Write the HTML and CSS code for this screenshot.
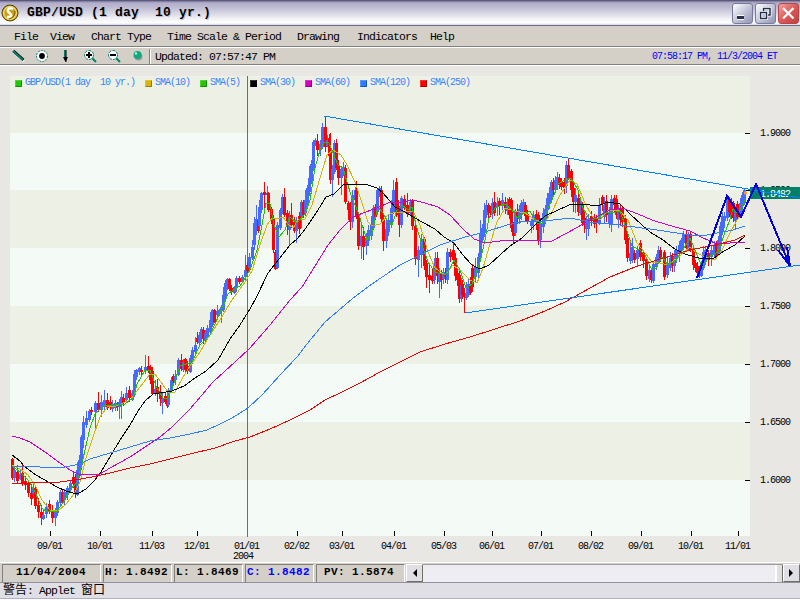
FILE: index.html
```html
<!DOCTYPE html>
<html lang="en">
<head>
    <meta charset="UTF-8">
    <title>GBP/USD (1 day 10 yr.)</title>
    <link rel="stylesheet" href="styles.css">
</head>
<body>
    <div class="window">
        <div class="title-bar">
            <svg class="app-icon" width="18" height="18" viewBox="0 0 18 18">
                <circle cx="9" cy="9" r="8" fill="#c9a21c" stroke="#594400"/>
                <circle cx="9" cy="9" r="6.3" fill="none" stroke="#fff6a0"/>
                <path d="M12 5C8 3 5 6 8 8.500S12 13 6 13" fill="none" stroke="#fff" stroke-width="2.400"/>
                <path d="M14 7C14 11 12 14 8 15" fill="none" stroke="#6f5600"/>
            </svg>
            <h1>GBP/USD (1 day&nbsp; 10 yr.)</h1>
            <div class="window-buttons">
                <button class="win-btn">
                    <svg width="19" height="19"><path d="M4 13.500h7" stroke="#fff" stroke-width="5"/><path d="M4 13.500h7" stroke="#273047" stroke-width="3"/></svg>
                </button>
                <button class="win-btn">
                    <svg width="19" height="19" fill="none"><path d="M7 7V4.500h7V11h-2M4.500 8.500h6v6h-6z" stroke="#fff" stroke-width="3"/><path d="M7.500 7V4.500h6.500V11h-2M4.500 8.500h6v6h-6z" stroke="#273047" stroke-width="1.500"/></svg>
                </button>
                <button class="win-btn close">
                    <svg width="19" height="19"><path d="M4 4l10.500 10.500M14.500 4L4 14.500" stroke="#fff" stroke-width="2.200"/></svg>
                </button>
            </div>
        </div>

        <div class="menu-bar">
            <span>File</span>
            <span>View</span>
            <span>Chart Type</span>
            <span>Time Scale &amp; Period</span>
            <span>Drawing</span>
            <span>Indicators</span>
            <span>Help</span>
        </div>

        <div class="toolbar">
            <svg class="tools" width="138" height="16" viewBox="0 0 138 16">
                <path d="M4 4l10 9" stroke="#fff" stroke-width="3"/>
                <path d="M3.500 3l10 9" stroke="#000" stroke-width="3"/>
                <path d="M3 3l10 9" stroke="#008066" stroke-width="2"/>
                <circle cx="32" cy="8" r="5.500" fill="#fff" stroke="#008066" stroke-dasharray="2 1"/>
                <circle cx="32" cy="8" r="2.900"/>
                <path d="M55 2v9" stroke="#008066" stroke-width="2"/>
                <path d="M56 2v12" stroke="#000"/>
                <path d="M53 9h5l-2.500 5z"/>
                <path d="M82 10l4 4" stroke="#008066" stroke-width="2"/>
                <circle cx="79" cy="7" r="4.500" fill="#fff" stroke="#008066" stroke-dasharray="3 1"/>
                <path d="M76 7h6M79 4v6" stroke="#000" stroke-width="2"/>
                <path d="M106 10l4 4" stroke="#008066" stroke-width="2"/>
                <circle cx="103" cy="7" r="4.500" fill="#fff" stroke="#008066" stroke-dasharray="3 1"/>
                <path d="M100 7h6" stroke="#000" stroke-width="2"/>
                <circle cx="128.500" cy="8.500" r="4" fill="#999"/>
                <circle cx="127.500" cy="7" r="4" fill="#13a87c"/>
                <circle cx="126" cy="5.500" r="1.200" fill="#b5ffe2"/>
            </svg>
            <span class="updated">Updated: 07:57:47 PM</span>
            <span class="clock">07:58:17 PM, 11/3/2004 ET</span>
        </div>

        <div class="chart-area">
            <svg id="chart" width="800" height="497" viewBox="0 65 800 497"></svg>
            <div class="legend">
                <span><i class="green"></i>GBP/USD(1 day&nbsp; 10 yr.)</span>
                <span><i class="gold"></i>SMA(10)</span>
                <span><i class="green"></i>SMA(5)</span>
                <span><i class="black"></i>SMA(30)</span>
                <span><i class="magenta"></i>SMA(60)</span>
                <span><i class="blue"></i>SMA(120)</span>
                <span><i class="red"></i>SMA(250)</span>
            </div>
        </div>

        <div class="quote-bar">
            <div class="cell date">11/04/2004</div>
            <div class="cell">H: 1.8492</div>
            <div class="cell">L: 1.8469</div>
            <div class="cell close-price">C: 1.8482</div>
            <div class="cell pv">PV: 1.5874</div>
            <div class="scrollbar">
                <div class="arrow"><svg width="5" height="8"><path d="M5 0v8L1 4z"/></svg></div>
                <div class="track"><div class="thumb"></div></div>
                <div class="arrow"><svg width="5" height="8"><path d="M0 0v8l4-4z"/></svg></div>
            </div>
        </div>

        <div class="applet-bar"><span lang="zh">警告</span>: Applet <span lang="zh">窗口</span></div>
    </div>

    <script src="chart.js"></script>
</body>
</html>
```

FILE: styles.css
```css
body {
    margin: 0;
    background-color: #fff;
    font-family: "Liberation Mono", "Noto Sans CJK SC", monospace;
    font-size: 11.5px;
    letter-spacing: -0.9px;
    color: #000;
    overflow: hidden;
}

.window {
    width: 800px;
    height: 600px;
    display: flex;
    flex-direction: column;
}

.title-bar {
    box-sizing: border-box;
    height: 26px;
    display: flex;
    align-items: center;
    padding: 0 1px 0 1px;
    border-top: 1px solid #5a5878;
    border-bottom: 1px solid #6b6b8c;
    background: linear-gradient(#77759a 0, #b3afca 2px, #b9b6cf 5px, #d2d1df 11px, #f3f3f7 18px, #fff 22px, #d5d5e1 24px);
}

.title-bar h1 {
    margin: 0 0 0 8px;
    font-size: 13px;
    line-height: 20px;
    letter-spacing: 0.2px;
    white-space: pre;
    text-shadow: 1px 1px 0 #c0bfce;
}

.window-buttons {
    display: flex;
    gap: 2px;
    margin-left: auto;
}

.win-btn {
    box-sizing: border-box;
    width: 21px;
    height: 21px;
    padding: 0;
    border: 1px solid #777a9c;
    border-radius: 3px;
    background: linear-gradient(135deg, #fff, #c5c6da 50%, #9293b2);
}

.win-btn svg {
    display: block;
}

.win-btn.close {
    border-color: #b5474b;
    background: linear-gradient(135deg, #f3a29d, #dc5a58 50%, #c33e40);
}

.menu-bar {
    box-sizing: border-box;
    height: 21px;
    display: flex;
    align-items: center;
    padding: 2px 0 0 14px;
    background-color: #d4d0c8;
    border-bottom: 1px solid #808080;
}

.menu-bar span {
    margin-right: 16px;
    line-height: 14px;
}

.menu-bar span:first-child {
    margin-right: 12px;
}

.menu-bar span:nth-child(2) {
    margin-right: 17px;
}

.menu-bar span:nth-child(5) {
    margin-right: 18px;
}

.menu-bar span:nth-child(6) {
    margin-right: 13px;
}

.toolbar {
    box-sizing: border-box;
    height: 18px;
    display: flex;
    align-items: center;
    padding-left: 10px;
    background-color: #d4d0c8;
    border-top: 1px solid #fff;
    border-bottom: 1px solid #808080;
}

.updated {
    margin-left: 1px;
    padding-left: 5px;
    border-left: 1px solid #808080;
    box-shadow: inset 1px 0 #fff;
    line-height: 14px;
    padding-top: 1px;
}

.clock {
    margin-left: auto;
    margin-right: 23px;
    color: #00f;
    font-size: 10px;
    letter-spacing: -1px;
}

.chart-area {
    position: relative;
    height: 497px;
    background-color: #e9e7e3;
    box-shadow: inset 0 1px #fff;
}

#chart {
    display: block;
}

#chart text {
    font-size: 10px;
    letter-spacing: -1px;
}

/* sits over the top band of the plot */
.legend {
    position: absolute;
    top: 12px;
    left: 15px;
    display: flex;
    gap: 10px;
    color: #3c82ff;
    font-size: 10px;
    line-height: 12px;
    letter-spacing: -1px;
}

.legend span {
    display: flex;
    align-items: center;
    white-space: pre;
}

.legend i {
    box-sizing: border-box;
    width: 7px;
    height: 7px;
    margin-right: 3px;
    border: 1px solid rgba(0, 0, 0, 0.3);
    border-top-color: rgba(255, 255, 255, 0.2);
    border-left-color: rgba(255, 255, 255, 0.2);
}

.green { background-color: #22c800; }
.gold { background-color: #d9b400; }
.black { background-color: #000; }
.magenta { background-color: #d400c8; }
.blue { background-color: #2f7dff; }
.red { background-color: #f00; }

.quote-bar {
    box-sizing: border-box;
    height: 20px;
    display: flex;
    gap: 2px;
    padding: 1px 0 0 2px;
    border-top: 1px solid #fff;
    background-color: #d4d0c8;
}

.cell {
    box-sizing: border-box;
    width: 69px;
    border: 1px solid #808080;
    border-right-color: #fff;
    border-bottom: 0;
    padding-left: 1px;
    font-size: 11px;
    font-weight: bold;
    line-height: 15px;
    letter-spacing: 0.4px;
    white-space: pre;
}

.cell.date {
    width: 99px;
    padding-left: 13px;
}

.close-price {
    color: #00f;
}

.cell.pv {
    width: 89px;
    padding-left: 7px;
}

.scrollbar {
    flex: 1;
    display: flex;
    margin-left: -1px;
}

.arrow {
    box-sizing: border-box;
    width: 17px;
    display: flex;
    align-items: center;
    justify-content: center;
    border: 1px solid #fff;
    border-right-color: #716f64;
    border-bottom-color: #716f64;
    background-color: #e0dfe3;
}

.track {
    flex: 1;
    display: flex;
    justify-content: flex-end;
    box-sizing: border-box;
    border-top: 1px solid #9c9ca5;
    background-color: #eeedf1;
}

.thumb {
    box-sizing: border-box;
    width: 8px;
    border-left: 2px solid #fff;
    border-right: 1px solid #716f64;
    background-color: #e0dfe3;
}

.applet-bar {
    box-sizing: border-box;
    height: 17px;
    padding-left: 3px;
    border-top: 1px solid #9090a0;
    border-bottom: 1px solid #b0b0cc;
    background-color: #e0dfe5;
    line-height: 16px;
    white-space: pre;
}

.applet-bar span {
    font-size: 12px;
    letter-spacing: 0;
}
```

FILE: chart.js
```js
const svg = document.getElementById('chart');

function add(tag, attrs, text) {
    const el = document.createElementNS('http://www.w3.org/2000/svg', tag);
    for (const key in attrs) el.setAttribute(key, attrs[key]);
    if (text) el.textContent = text;
    svg.appendChild(el);
}

function line(points, color, width) {
    add('polyline', {
        points: points, fill: 'none', stroke: color,
        'stroke-width': width || 1, 'shape-rendering': 'crispEdges'
    });
}

// background bands
const bands = [76, 133, 190, 248, 306, 364, 422, 480, 536];
for (let i = 0; i < bands.length - 1; i++) {
    add('rect', {
        x: 10, y: bands[i], width: 740, height: bands[i + 1] - bands[i],
        fill: i % 2 ? '#f4faf5' : '#edf1e5'
    });
}

// price axis
const prices = [[133, '1.9000'], [190, '1.8500'], [248, '1.8000'], [306, '1.7500'], [364, '1.7000'], [422, '1.6500'], [480, '1.6000']];
prices.forEach(([y, label]) => {
    add('rect', { x: 745, y: y, width: 5, height: 1 });
    add('text', { x: 760, y: y + 3 }, label);
});

// date axis
const dates = [[50, '09/01'], [100, '10/01'], [152, '11/03'], [197, '12/01'], [247, '01/01'], [297, '02/02'], [342, '03/01'], [394, '04/01'], [444, '05/03'], [492, '06/01'], [541, '07/01'], [591, '08/02'], [641, '09/01'], [691, '10/01'], [738, '11/01']];
dates.forEach(([x, label]) => {
    add('rect', { x: x, y: 531, width: 1, height: 5 });
    add('text', { x: x - 13, y: 549 }, label);
});
add('text', { x: 233, y: 559 }, '2004');
add('rect', { x: 247, y: 76, width: 1, height: 461, fill: '#6f6f68' });

// direction x bodyTop bodyBottom high low
const candles = `
r 12 459 478 458 480,b 14 470 478 468 482,r 17 472 481 465 483,b 20 474 479 470 480,r 22 473 483 463 486,r 25 481 485 476 490,
r 28 484 493 482 497,r 31 493 499 484 505,b 33 488 494 484 498,r 35 488 506 486 509,r 38 505 512 498 518,r 41 512 518 505 525,
b 43 515 519 510 520,b 46 507 514 503 518,r 49 504 512 500 514,r 52 512 518 505 523,b 55 512 518 508 526,b 57 502 513 500 516,
b 60 492 503 490 506,r 62 492 502 490 503,b 64 492 500 489 506,b 67 488 495 486 500,b 70 483 490 480 492,r 73 477 484 471 488,
r 75 478 494 474 498,b 77 470 495 462 496,b 79 460 476 455 478,b 81 437 465 435 470,b 83 422 440 416 448,b 86 418 425 411 428,
b 89 411 420 409 422,r 91 410 412 407 415,b 95 403 412 401 429,r 98 403 410 392 412,b 101 402 410 395 417,b 104 400 407 390 410,
r 107 400 408 393 410,r 110 402 407 396 410,b 112 404 409 400 412,b 115 403 408 400 411,r 117 404 407 402 411,b 119 402 407 399 419,
b 121 397 404 391 419,r 123 398 403 394 406,b 126 393 400 387 402,r 129 390 398 386 402,b 132 393 400 390 401,b 134 374 395 370 397,
b 136 370 377 369 380,b 139 368 372 367 375,r 141 370 372 366 376,b 145 367 371 355 374,r 148 366 371 356 373,r 150 367 380 365 384,
r 152 371 394 367 395,b 155 389 394 380 396,r 157 387 394 379 402,r 160 392 399 385 406,b 162 399 403 393 414,r 165 396 402 393 404,
r 167 399 406 395 408,b 168 390 405 388 407,b 171 380 391 377 392,r 173 376 381 374 383,b 175 376 380 370 385,b 178 360 375 358 376,
r 181 360 369 354 371,b 183 362 370 359 372,r 185 359 370 358 374,r 187 366 371 361 374,b 190 358 372 355 373,b 192 350 362 347 364,
b 195 345 352 337 354,r 197 338 342 332 344,b 199 335 343 332 345,b 201 329 337 327 342,r 203 330 339 327 344,b 205 333 340 330 344,
b 207 328 336 325 338,b 210 320 332 312 334,b 212 310 325 309 327,r 214 310 322 309 323,b 217 311 315 305 320,b 219 310 314 309 316,
b 221 307 311 305 323,b 223 295 310 287 312,b 225 283 299 280 302,b 227 279 288 278 290,r 229 279 289 278 291,r 231 288 292 285 295,
b 234 287 293 286 294,b 236 278 288 276 292,r 239 278 282 276 284,b 242 277 282 275 283,b 245 270 277 255 280,r 247 265 271 262 273,
b 249 257 268 253 270,b 252 247 258 240 260,b 254 223 245 217 250,b 256 219 230 205 235,r 258 220 231 218 233,b 259 207 226 200 230,
b 261 193 210 192 213,r 264 192 195 182 212,b 267 193 195 186 197,r 268 193 210 192 212,r 271 209 220 207 224,r 273 218 250 215 253,
r 275 252 269 250 270,b 277 225 268 222 269,b 280 210 228 208 230,b 282 197 212 194 214,r 284 197 215 188 217,r 287 213 225 210 235,
b 289 217 230 211 246,r 291 215 225 203 228,r 294 222 231 217 233,b 296 220 231 217 243,r 299 216 229 212 234,b 301 202 216 200 228,
r 303 202 215 200 218,b 305 200 213 190 216,b 307 188 205 185 209,b 309 178 192 166 196,b 311 164 182 160 184,b 313 142 168 140 171,
b 315 140 144 138 146,r 317 141 150 134 156,b 320 144 150 140 156,b 322 127 147 123 149,r 325 127 147 116 152,b 327 140 146 135 147,
r 329 138 156 134 162,r 330 148 180 133 184,b 332 169 180 165 197,b 334 143 172 140 174,r 336 143 168 139 170,r 338 166 178 160 185,
b 341 169 178 166 195,b 343 167 173 162 176,r 345 168 202 165 204,r 348 203 210 201 220,r 350 204 222 202 230,b 352 195 222 190 228,
b 355 190 200 187 204,r 356 190 217 181 219,r 358 216 246 213 250,b 361 236 246 225 259,r 363 236 247 227 260,b 366 238 246 233 255,
b 368 230 241 225 246,b 371 225 236 216 240,b 373 208 228 205 230,r 375 207 217 204 220,b 377 190 212 188 215,b 379 188 195 186 197,
r 381 190 219 186 223,r 383 218 241 215 251,b 386 229 241 220 248,b 388 220 232 215 236,b 391 208 225 200 228,b 393 190 212 180 214,
r 396 182 213 178 217,r 398 208 215 200 220,r 399 212 225 206 237,b 401 198 225 196 228,r 404 199 208 195 210,r 407 205 214 193 217,
b 410 202 213 199 216,r 412 201 226 199 230,r 415 226 259 224 265,b 418 250 260 246 277,b 421 239 255 234 268,r 424 239 266 237 270,
r 426 263 277 260 288,r 429 275 280 263 293,r 432 276 281 268 284,b 434 263 280 258 284,b 435 258 267 252 272,r 437 258 276 252 284,
b 439 274 282 268 298,r 441 274 280 270 289,b 443 272 279 268 284,r 445 274 277 268 283,b 447 252 280 248 284,r 450 252 257 249 262,
r 453 250 260 242 264,r 455 258 276 253 281,r 457 273 280 269 286,r 459 275 299 271 303,b 461 285 299 278 302,r 462 284 295 280 299,
r 464 293 297 288 313,b 466 293 298 282 300,b 468 284 295 279 297,r 470 285 293 277 295,r 472 268 287 264 292,b 475 267 277 258 282,
b 478 257 273 253 280,b 480 233 258 220 262,b 482 228 240 224 243,b 484 210 233 203 237,b 486 205 215 200 218,r 488 205 212 203 218,
r 490 209 213 206 217,b 492 203 214 198 219,r 494 202 213 192 216,b 497 203 207 197 216,r 499 201 206 198 215,b 502 200 206 193 210,
r 505 202 208 197 214,b 507 203 211 198 215,r 509 199 215 197 219,r 511 200 228 198 232,r 513 226 236 222 243,b 515 211 233 209 236,
r 517 211 218 204 224,b 519 209 219 205 224,b 521 203 215 200 220,b 523 202 208 199 212,r 525 205 216 202 222,r 527 214 222 210 224,
b 531 222 226 219 233,b 533 215 222 211 230,r 536 214 222 210 230,r 538 215 240 212 245,b 540 224 240 218 248,b 543 213 227 208 233,
b 545 209 219 205 224,b 547 198 210 193 218,b 549 193 203 187 209,b 551 182 197 180 203,r 553 182 190 178 196,b 555 180 190 176 193,
b 557 177 184 172 190,r 559 178 185 174 189,r 561 182 187 178 190,r 564 182 188 178 194,b 566 165 186 161 193,r 568 165 178 159 180,
r 571 171 190 169 197,r 573 188 202 183 212,b 575 195 202 188 213,r 578 198 212 193 216,b 580 204 213 199 215,r 582 205 223 202 226,
r 584 218 225 212 233,b 586 220 229 216 240,b 588 219 229 214 236,r 591 216 221 211 226,r 594 219 224 214 228,r 596 219 223 215 233,
b 599 205 224 198 225,r 602 197 204 195 211,b 604 205 217 197 224,r 606 201 215 195 222,b 609 213 224 207 228,b 611 199 224 195 232,
r 614 198 205 195 212,r 616 199 215 195 219,b 618 209 220 205 228,r 620 209 219 205 225,r 622 209 222 206 227,r 625 218 240 215 244,
r 627 238 258 234 262,b 630 253 261 242 264,b 632 247 257 238 263,r 634 253 260 250 263,b 637 250 259 246 266,r 640 243 257 240 261,
r 643 252 261 250 268,r 646 259 276 257 280,b 649 270 279 264 282,r 651 271 280 268 283,b 653 264 281 261 283,b 656 257 267 254 270,
b 658 250 261 246 263,r 660 250 258 247 262,r 664 252 277 250 280,b 667 263 275 256 278,b 670 258 268 252 271,r 672 256 265 253 272,
b 674 257 266 250 272,b 676 250 258 246 263,b 679 245 254 241 262,b 681 240 251 238 254,b 683 234 243 231 249,r 686 234 248 230 252,
b 688 234 249 232 251,r 690 234 250 232 252,r 693 250 265 247 270,r 695 263 268 260 272,r 697 266 273 262 276,r 699 270 276 266 278,
b 701 264 276 261 277,b 703 252 268 246 270,b 705 250 261 247 265,r 708 253 260 250 266,b 711 250 257 246 266,b 714 245 254 241 257,
r 716 244 257 241 259,b 718 240 254 236 256,b 720 226 246 222 254,b 722 216 232 212 235,b 724 216 221 212 228,b 727 199 218 196 221,
r 729 200 212 197 217,r 731 202 217 198 219,r 733 203 218 201 222,b 735 210 221 206 230,r 737 204 217 201 219,b 740 203 215 198 217,
b 742 195 206 192 212,b 744 190 203 189 205`;
candles.trim().split(/,\s*/).forEach(row => {
    const [dir, x, top, bottom, high, low] = row.split(' ');
    const fill = dir === 'r' ? '#ff0000' : '#4669ff';
    add('rect', { x: x, y: high, width: 1, height: low - high, fill: fill });
    add('rect', { x: x - 1, y: top, width: 3, height: bottom - top, fill: fill });
});

// moving averages
line('12,465 20,469 28,475 35,485 42,500 50,510 58,511 66,504 74,494 80,482 86,458 92,440 100,417 108,406 116,406 130,400 140,387 150,374 155,374 163,385 168,392 175,392 183,377 190,366 200,352 210,335 220,320 232,300 245,282 252,271 260,245 267,225 272,218 277,219 283,217 288,224 293,228 298,220 305,219 312,205 320,178 327,155 333,150 341,155 347,165 355,182 362,203 368,222 372,226 380,224 388,215 395,212 405,212 413,211 420,225 428,252 435,268 445,275 453,265 462,272 470,280 477,283 483,268 490,244 497,222 505,208 515,211 525,213 535,220 545,222 552,212 560,195 570,180 577,184 585,203 592,216 600,220 608,210 620,211 628,220 637,243 645,253 652,262 660,263 668,265 680,256 690,247 697,253 705,257 715,260 722,250 730,233 737,220 745,210', '#d6b400');
line('12,466 20,472 28,480 35,492 42,508 46,511 56,512 63,503 70,490 77,482 81,468 85,450 90,428 95,414 103,406 115,405 125,404 133,398 137,384 145,370 150,370 156,386 163,398 168,398 174,383 180,366 192,362 200,345 210,335 220,313 228,294 233,290 240,286 250,270 257,250 262,225 266,203 270,204 274,225 279,237 285,230 290,217 297,223 305,214 310,200 315,168 320,150 324,142 329,143 335,158 338,165 343,168 347,182 352,198 358,212 363,228 367,240 372,232 378,207 383,213 388,222 392,225 397,210 402,205 408,210 412,207 416,225 422,245 428,262 435,272 445,275 450,268 454,260 460,270 466,288 472,284 480,262 485,240 489,218 495,208 505,204 512,210 517,218 523,214 530,211 537,223 542,224 548,208 552,200 558,184 565,180 571,178 578,190 583,208 590,220 598,218 606,212 612,213 620,211 625,225 632,246 640,250 645,255 652,270 656,268 662,257 668,265 676,260 684,248 690,238 695,250 702,267 710,256 718,252 724,235 729,222 733,209 738,214 745,200', '#1fc600');
line('12,455 20,461 24,466 29,470 36,475 43,479 50,483 57,487 66,491 73,493 79,493 86,489 94,481 101,472 107,462 114,450 122,437 130,425 138,411 145,401 153,394 166,392 172,391 184,386 195,378 206,371 218,360 222,353 230,339 240,325 250,309 257,296 268,273 279,259 290,245 297,239 303,232 310,222 318,210 326,197 334,194 343,185 355,184 365,184 377,188 383,193 395,207 403,211 415,218 422,222 435,229 444,237 454,243 462,254 472,265 480,269 489,265 500,255 510,246 522,238 535,225 545,216 556,211 569,205 580,204 590,205 600,205 608,202 620,204 630,214 642,225 650,232 663,240 675,249 685,254 695,257 703,259 714,258 724,251 735,245 745,236', '#000');
line('12,436 20,438 30,442 45,452 60,463 70,470 80,475 100,474 110,468 130,457 145,447 160,437 172,427 190,409 213,382 235,362 250,348 270,325 290,300 302,287 315,266 328,245 340,230 353,217 363,213 377,208 388,203 402,202 413,200 425,203 438,207 450,215 463,229 474,239 485,243 500,241 520,240 540,241 552,241 565,234 578,227 588,221 600,215 610,210 622,208 638,214 652,220 668,225 690,231 703,238 715,243 730,243 745,242', '#cf00c5');
line('12,466 40,467 65,467 80,464 90,459 110,453 130,447 150,441 170,438 190,434 207,430 220,424 232,418 248,408 262,395 280,375 297,357 307,344 325,322 352,299 372,284 400,265 420,255 440,245 465,237 485,232 507,225 525,221 545,221 570,218 590,222 620,225 657,230 690,235 707,235 733,230 745,226', '#2f7dff');
line('12,484 30,483 60,482 75,480 92,477 110,473 130,468 150,464 170,459 190,454 215,448 235,441 250,437 270,429 290,420 310,410 325,400 340,393 360,383 380,372 400,362 420,352 445,344 470,337 495,329 520,321 545,311 565,302 590,288 610,277 635,267 660,259 690,250 715,245 735,240 745,235', '#f00000');

// last price tag
add('rect', { x: 750, y: 187, width: 50, height: 12, fill: '#008066' });
add('text', { x: 760, y: 197, fill: '#fff' }, '1.8482');
add('circle', { cx: 745.5, cy: 193, r: 1.7, fill: '#ff9c20' });

// trend lines and projection
line('324,116 800,198', '#0080ff');
line('465,313 800,265', '#0080ff');
line('697,278 727,196 741,217 756,184 790,266', '#0000df', 2);
line('778,250 790,266 787,247', '#0000df', 2);
```
